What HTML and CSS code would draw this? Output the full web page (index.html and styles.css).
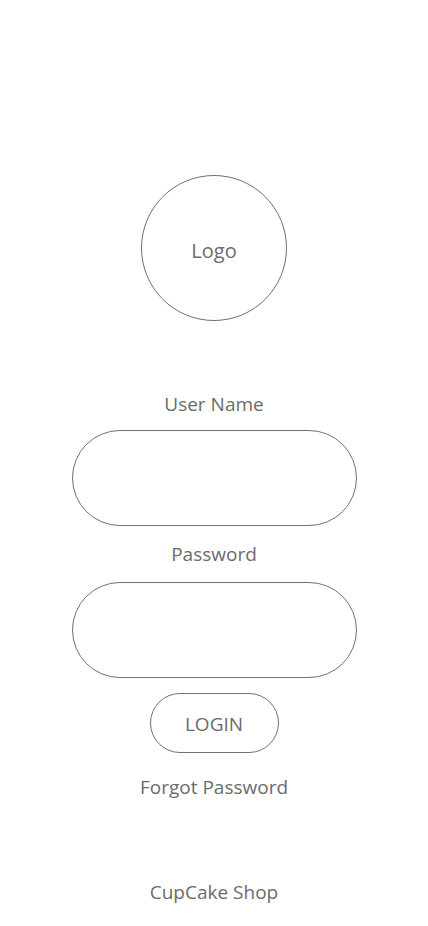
FILE: index.html
```html
<!DOCTYPE html>
<html>
<head>
<meta charset="utf-8">
<link rel="stylesheet" href="styles.css">
</head>
<body>
<main class="screen">
  <div class="logo"><span>Logo</span></div>
  <form class="login-form">
    <label class="field-label">User Name</label>
    <div class="field"></div>
    <label class="field-label field-label--second">Password</label>
    <div class="field"></div>
    <button type="button" class="login-btn">LOGIN</button>
    <a class="forgot">Forgot Password</a>
  </form>
  <footer class="brand">CupCake Shop</footer>
</main>
</body>
</html>
```
FILE: styles.css
```css
* { box-sizing: border-box; }
html, body {
  margin: 0;
  padding: 0;
  background: #ffffff;
}
body {
  font-family: "Open Sans", "Noto Sans", sans-serif;
  color: #6b6b6b;
  font-size: 19px;
}
.screen {
  width: 428px;
  height: 926px;
  display: flex;
  flex-direction: column;
  align-items: center;
  padding-top: 175px;
}
.logo {
  width: 146px;
  height: 146px;
  border: 1px solid #707070;
  border-radius: 50%;
  display: flex;
  align-items: center;
  justify-content: center;
  padding-top: 4px;
  font-size: 20px;
}
.login-form {
  display: flex;
  flex-direction: column;
  align-items: center;
  margin-top: 71px;
}
.field-label {
  line-height: 24px;
  height: 24px;
  margin-bottom: 14px;
}
.field-label--second {
  margin-top: 16px;
  margin-bottom: 16px;
}
.field {
  width: 285px;
  height: 96px;
  border: 1px solid #707070;
  border-radius: 48px;
}
.login-btn {
  margin-top: 15px;
  width: 129px;
  height: 60px;
  border: 1px solid #707070;
  border-radius: 30px;
  background: #fff;
  font-family: inherit;
  font-size: 19px;
  color: #6b6b6b;
  padding: 2px 0 0;
}
.forgot {
  margin-top: 22px;
  line-height: 24px;
}
.brand {
  margin-top: 81px;
  line-height: 24px;
}
```
